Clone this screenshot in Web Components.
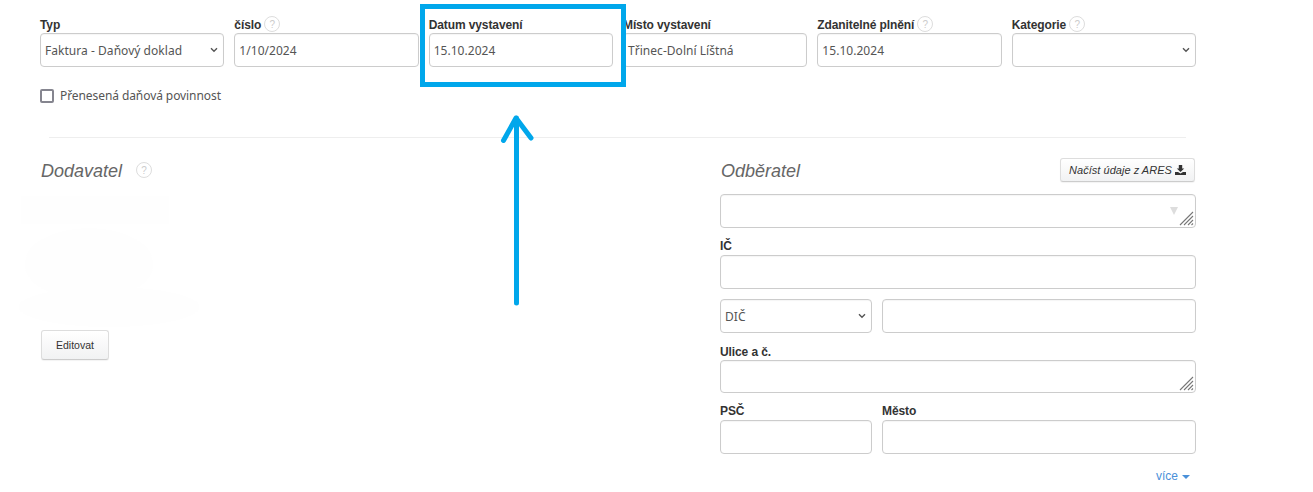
<!DOCTYPE html>
<html lang="cs"><head><meta charset="utf-8"><title>Faktura</title>
<style>
html,body{margin:0;padding:0;background:#fff;overflow:hidden}
body{font:12px "Liberation Sans",Arial,sans-serif;color:#333;height:492px;position:relative}
</style></head><body>
<inv-page>
  <inv-top-row>
    <inv-field label="Typ"><inv-select>Faktura - Daňový doklad</inv-select></inv-field>
    <inv-field label="číslo" help><inv-input>1/10/2024</inv-input></inv-field>
    <inv-field label="Datum vystavení"><inv-input>15.10.2024</inv-input></inv-field>
    <inv-field label="Místo vystavení"><inv-input>Třinec-Dolní Líštná</inv-input></inv-field>
    <inv-field label="Zdanitelné plnění" help><inv-input>15.10.2024</inv-input></inv-field>
    <inv-field label="Kategorie" help><inv-select></inv-select></inv-field>
  </inv-top-row>
  <inv-check>Přenesená daňová povinnost</inv-check>
  <inv-divider></inv-divider>
  <inv-columns>
    <inv-supplier></inv-supplier>
    <inv-customer></inv-customer>
  </inv-columns>
</inv-page>
<inv-annotation></inv-annotation>
<script>
const UI='font:12px "Noto Sans","Liberation Sans",sans-serif;letter-spacing:.04px;color:#555;';
const CTRL=`display:block;box-sizing:border-box;height:34px;border:1px solid #ccc;border-radius:4px;background:#fff;box-shadow:inset 0 1px 1px rgba(0,0,0,.04);${UI}`;
const def=(name,html)=>{customElements.define(name,class extends HTMLElement{
  constructor(){super();this.attachShadow({mode:'open'}).innerHTML=typeof html==='function'?html(this):html;}
});};
const CHEV=`<svg width="8" height="6" viewBox="0 0 8 6" aria-hidden="true"><path d="M1 1.200 4 4.200 7 1.200" fill="none" stroke="#555" stroke-width="1.400"/></svg>`;
const GRIP=`<svg class="grip" width="15" height="15" viewBox="0 0 15 15" aria-hidden="true"><path d="M1 14 14 1M5 14 14 5M9 14 14 9M12.500 14 14 12.500" stroke="#777" stroke-width="1.100" fill="none"/></svg>`;

def('inv-page',`<style>:host{display:block;box-sizing:border-box;width:1196px;padding:15px 0 0 40px}</style><slot></slot>`);
def('inv-top-row',`<style>:host{display:grid;grid-template-columns:repeat(6,1fr);column-gap:10px;--label-shift:1px}</style><slot></slot>`);
def('inv-help',`<style>:host{display:inline-flex;align-items:center;justify-content:center;box-sizing:border-box;width:16px;height:16px;border:1px solid #ddd;border-radius:50%;font:10px "Liberation Sans",sans-serif;color:#ccc;vertical-align:middle}</style>?`);
def('inv-field',h=>`<style>
:host{display:block;min-width:0}
.l{display:flex;align-items:center;gap:3px;height:18px;font:bold 12px "Liberation Sans",Arial,sans-serif;letter-spacing:-.1px;color:#333;white-space:nowrap}
.l span{position:relative;top:var(--label-shift,0)}
</style><div class="l"><span>${h.getAttribute('label')||''}</span>${h.hasAttribute('help')?'<inv-help></inv-help>':''}</div><slot></slot>`);
def('inv-input',`<style>:host{${CTRL}padding:1px 4px 0;line-height:32px;white-space:nowrap;overflow:hidden}</style><slot></slot>`);
def('inv-select',`<style>:host{${CTRL}padding:0 5px 0 4px}
.r{display:flex;align-items:center;justify-content:space-between;height:32px;white-space:nowrap}
.r span{padding-top:1px}</style><div class="r"><span><slot></slot></span>${CHEV}</div>`);
def('inv-textarea',`<style>:host{${CTRL}position:relative}
.grip{position:absolute;right:1px;bottom:1px}
.tri{position:absolute;right:17px;top:12px;width:0;height:0;border:4.500px solid transparent;border-top:8px solid #ddd;border-bottom:0}
:host(:not([combo])) .tri{display:none}</style><span class="tri"></span>${GRIP}`);
def('inv-check',`<style>:host{display:flex;align-items:center;gap:6px;margin-top:22px;height:14px;${UI}letter-spacing:-.08px;white-space:nowrap}
i{display:block;box-sizing:border-box;width:14px;height:14px;border:2px solid #85858f;border-radius:2px;background:#fff}
span{margin-top:-1px}</style><i></i><span><slot></slot></span>`);
def('inv-divider',`<style>:host{display:block;height:1px;background:#eee;margin:34px 10px 0 9px}</style>`);
def('inv-columns',`<style>:host{display:grid;grid-template-columns:1fr 476px;column-gap:20px;padding-top:20px;margin-left:1px}</style><slot></slot>`);
def('inv-title',`<style>:host{display:block;font:italic 18px "Liberation Sans",Arial,sans-serif;color:#666;white-space:nowrap;line-height:24px;padding-top:1px}</style><slot></slot>`);
def('inv-btn',`<style>:host{display:inline-flex;align-items:center;justify-content:center;gap:3px;box-sizing:border-box;border:1px solid #ddd;border-bottom-color:#ccc;border-radius:3px;background:linear-gradient(#fff,#f1f2f3);box-shadow:0 1px 1px rgba(0,0,0,.05);font:11px "Liberation Sans",Arial,sans-serif;color:#333;white-space:nowrap}</style><slot></slot>`);

def('inv-supplier',`<style>:host{display:block}
.h{display:flex;align-items:center;gap:14px;height:24px}
.ghost{display:block;margin:10px 0 0 -22px}
inv-btn{width:68px;height:30px;margin-top:-4px;font-size:10.500px}
</style>
<div class="h"><inv-title>Dodavatel</inv-title><inv-help></inv-help></div>
<svg class="ghost" width="190" height="142" viewBox="0 0 190 142" aria-hidden="true">
<rect x="2" y="4" width="148" height="28" fill="#fefefe"/><ellipse cx="70" cy="72" rx="64" ry="36" fill="#fefefe"/><ellipse cx="90" cy="115" rx="90" ry="20" fill="#fefefe"/>
</svg>
<inv-btn>Editovat</inv-btn>`);

def('inv-customer',`<style>:host{display:block}
.h{display:flex;align-items:center;justify-content:space-between;height:24px;margin-bottom:12px}
.h inv-title{margin-left:1px}
.h inv-btn{width:135px;height:24px;margin-right:1px;font-style:italic;font-size:11px;padding:0 0 1px 0;letter-spacing:.03px}
.dl{display:block}
.two{display:grid;grid-template-columns:152px 1fr;column-gap:10px}
.mt10{margin-top:10px}.mt9{margin-top:9px}
.ta2{height:33px}
.shift{--label-shift:1px}
.more{display:flex;justify-content:flex-end;align-items:center;gap:4px;margin-top:15px;padding-right:6px;font:12px "Liberation Sans",Arial,sans-serif;color:#4a90d9;height:14px}
.more i{display:block;width:0;height:0;border:4px solid transparent;border-top:4px solid #4a90d9;border-bottom:0;margin-top:2px}
</style>
<div class="h"><inv-title>Odběratel</inv-title>
<inv-btn>Načíst údaje z ARES<svg class="dl" width="11" height="10" viewBox="0 0 11 10" aria-hidden="true"><path d="M3.800 0h3.400v3.500h2L5.500 7 1.800 3.500h2zM0 7h3l2.500 1.500L8 7h3v3H0z" fill="#333"/></svg></inv-btn></div>
<inv-textarea combo></inv-textarea>
<inv-field label="IČ" class="mt9"><inv-input></inv-input></inv-field>
<div class="two mt10"><inv-select>DIČ</inv-select><inv-input></inv-input></div>
<inv-field label="Ulice a č." class="mt9 shift"><inv-textarea class="ta2"></inv-textarea></inv-field>
<div class="two mt9"><inv-field label="PSČ"><inv-input></inv-input></inv-field><inv-field label="Město"><inv-input></inv-input></inv-field></div>
<div class="more"><span>více</span><i></i></div>`);

def('inv-annotation',`<style>:host{display:block;position:absolute;inset:0;pointer-events:none}
.box{position:absolute;left:420px;top:4px;width:206px;height:83px;box-sizing:border-box;border:5px solid #00a7eb}
svg{position:absolute;left:490px;top:105px}</style>
<div class="box"></div>
<svg width="60" height="210" viewBox="0 0 60 210" aria-hidden="true"><path d="M26.500 198V13M13.500 35.500 26 13 41 33" fill="none" stroke="#00a7eb" stroke-width="5" stroke-linecap="round" stroke-linejoin="round"/></svg>`);
</script>
</body></html>
